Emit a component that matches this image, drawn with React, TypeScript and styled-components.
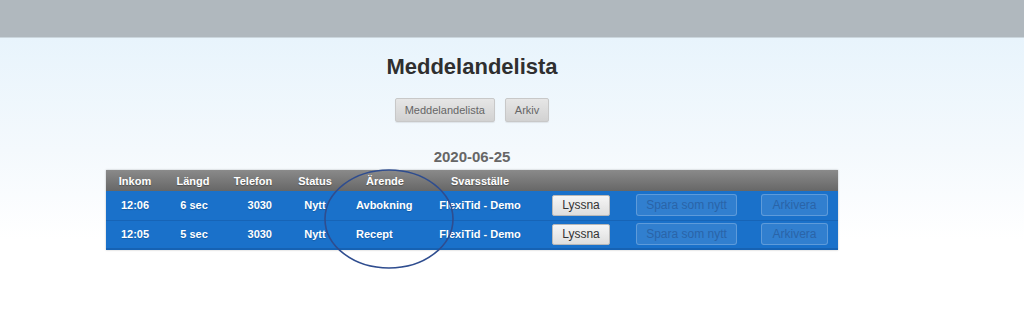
import React from 'react';
import styled, { createGlobalStyle } from 'styled-components';

type Message = {
	time: string;
	length: string;
	phone: string;
	status: string;
	topic: string;
	place: string;
};

const messages: Message[] = [
	{ time: '12:06', length: '6 sec', phone: '3030', status: 'Nytt', topic: 'Avbokning', place: 'FlexiTid - Demo' },
	{ time: '12:05', length: '5 sec', phone: '3030', status: 'Nytt', topic: 'Recept', place: 'FlexiTid - Demo' },
];

const GlobalStyle = createGlobalStyle`
	html, body {
		margin: 0;
		padding: 0;
		background: #fff;
		font-family: 'Liberation Sans', Arial, sans-serif;
	}
`;

const Page = styled.div`
	width: 1024px;
	height: 333px;
	overflow: hidden;
	background: linear-gradient(#e8f4fc 38px, #f4f9fd 150px, #ffffff 240px);
`;

const TopBar = styled.div`
	height: 37px;
	background: #b0b8be;
	border-bottom: 1px solid #cbd6dd;
`;

const Main = styled.main`
	width: 732px;
	margin-left: 106px;
	display: flex;
	flex-direction: column;
	align-items: center;
`;

const Title = styled.h1`
	margin: 16px 0 0;
	font-size: 22px;
	line-height: 25px;
	font-weight: bold;
	color: #2f2f2f;
`;

const TabRow = styled.div`
	display: flex;
	gap: 10px;
	margin-top: 19px;
`;

const TabButton = styled.button`
	height: 24px;
	padding: 0 9px;
	font-family: 'Liberation Sans', Arial, sans-serif;
	font-size: 11px;
	color: #666;
	background: linear-gradient(#e6e6e6, #d2d2d2);
	border: 1px solid #c8c8c8;
	border-radius: 2px;
	box-shadow: 0 1px 1px rgba(0, 0, 0, 0.08);
`;

const DateLabel = styled.div`
	margin-top: 26px;
	font-size: 15px;
	line-height: 17px;
	font-weight: bold;
	color: #666;
`;

const TableWrap = styled.div`
	position: relative;
	width: 732px;
	margin-top: 5px;
`;

const Table = styled.table`
	width: 732px;
	border-collapse: collapse;
	table-layout: fixed;
	background: #1a71ca;
	box-shadow: 0 0 2px rgba(0, 0, 0, 0.25);
	border-bottom: 2px solid #1662b3;
`;

const HeadCell = styled.th<{ $w: number }>`
	width: ${(p) => p.$w}px;
	height: 21px;
	padding: 0;
	font-size: 11px;
	font-weight: bold;
	color: #fff;
	text-align: center;
	background: linear-gradient(#8a8a8a, #676767);
	text-shadow: 0 1px 1px rgba(0, 0, 0, 0.3);
`;

const Row = styled.tr`
	height: 29px;
	& + & td {
		border-top: 1px solid #1764b6;
	}
`;

const Cell = styled.td<{ $align?: 'left' | 'center' | 'right'; $pad?: string }>`
	padding: ${(p) => p.$pad || '0'};
	font-size: 11px;
	font-weight: bold;
	color: #fff;
	text-align: ${(p) => p.$align || 'center'};
	white-space: nowrap;
	text-shadow: 0 1px 1px rgba(0, 0, 0, 0.2);
`;

const ListenButton = styled.button`
	height: 21px;
	width: 58px;
	padding: 0;
	font-family: 'Liberation Sans', Arial, sans-serif;
	font-size: 12px;
	color: #333;
	background: linear-gradient(#f6f6f6, #dedede);
	border: 1px solid #b8b8b8;
	border-radius: 2px;
	vertical-align: middle;
`;

const DisabledButton = styled.button<{ $w: number }>`
	height: 22px;
	width: ${(p) => p.$w}px;
	padding: 0;
	font-family: 'Liberation Sans', Arial, sans-serif;
	font-size: 12px;
	color: #2a64a8;
	background: rgba(255, 255, 255, 0.1);
	border: 1px solid rgba(255, 255, 255, 0.22);
	border-radius: 3px;
	vertical-align: middle;
`;

const Annotation = styled.svg`
	position: absolute;
	left: 216px;
	top: -2px;
	pointer-events: none;
`;

const columns = [
	{ label: 'Inkom', w: 58 },
	{ label: 'Längd', w: 58 },
	{ label: 'Telefon', w: 62 },
	{ label: 'Status', w: 62 },
	{ label: 'Ärende', w: 78 },
	{ label: 'Svarsställe', w: 112 },
	{ label: '', w: 90 },
	{ label: '', w: 120 },
	{ label: '', w: 92 },
];

const App = (): JSX.Element => {
	return (
		<Page>
			<GlobalStyle />
			<TopBar />
			<Main>
				<Title>Meddelandelista</Title>
				<TabRow>
					<TabButton>Meddelandelista</TabButton>
					<TabButton>Arkiv</TabButton>
				</TabRow>
				<DateLabel>2020-06-25</DateLabel>
				<TableWrap>
					<Table>
						<thead>
							<tr>
								{columns.map((c, i) => (
									<HeadCell key={i} $w={c.w}>
										{c.label}
									</HeadCell>
								))}
							</tr>
						</thead>
						<tbody>
							{messages.map((m) => (
								<Row key={m.time}>
									<Cell>{m.time}</Cell>
									<Cell $pad="0 0 0 2px">{m.length}</Cell>
									<Cell $align="right" $pad="0 12px 0 0">
										{m.phone}
									</Cell>
									<Cell>{m.status}</Cell>
									<Cell $align="left" $pad="0 0 0 10px">
										{m.topic}
									</Cell>
									<Cell>{m.place}</Cell>
									<Cell $align="left" $pad="0 0 0 16px">
										<ListenButton>Lyssna</ListenButton>
									</Cell>
									<Cell $align="left" $pad="0 0 0 10px">
										<DisabledButton $w={101} disabled>
											Spara som nytt
										</DisabledButton>
									</Cell>
									<Cell $align="left" $pad="0 0 0 15px">
										<DisabledButton $w={67} disabled>
											Arkivera
										</DisabledButton>
									</Cell>
								</Row>
							))}
						</tbody>
					</Table>
					<Annotation width="134" height="102" viewBox="0 0 134 102">
						<ellipse cx="67" cy="51" rx="64" ry="49" fill="none" stroke="#2f4d8f" strokeWidth="1.6" />
					</Annotation>
				</TableWrap>
			</Main>
		</Page>
	);
};

export default App;
